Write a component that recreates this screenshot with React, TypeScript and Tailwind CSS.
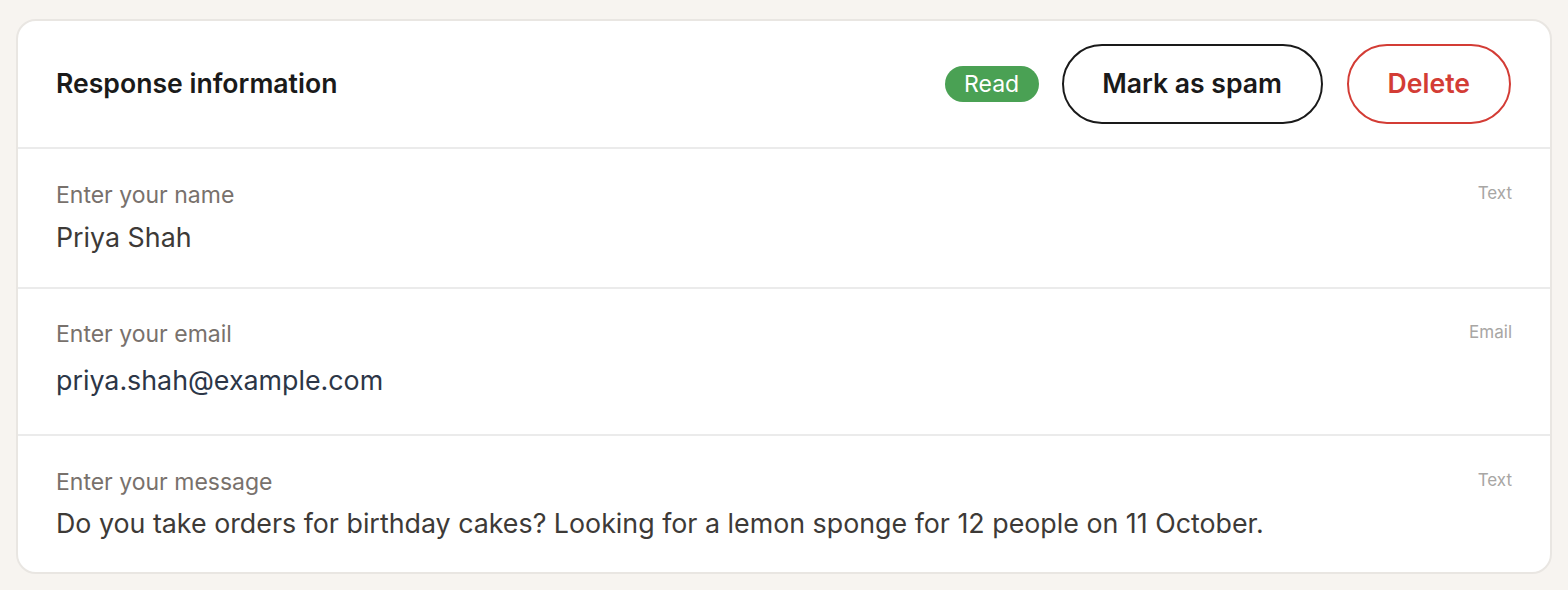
const fields = [
  {
    label: "Enter your name",
    value: "Priya Shah",
    type: "Text",
    rowClass: "pt-8 pb-[34px]",
    valueClass: "text-[#3d3a37] mt-3",
  },
  {
    label: "Enter your email",
    value: "priya.shah@example.com",
    type: "Email",
    rowClass: "pt-[31px] pb-[38px]",
    valueClass: "text-[#2c3647] mt-4",
  },
  {
    label: "Enter your message",
    value: "Do you take orders for birthday cakes? Looking for a lemon sponge for 12 people on 11 October.",
    type: "Text",
    rowClass: "pt-8 pb-[33px]",
    valueClass: "text-[#3d3a37] mt-[11px]",
  },
];

export default function App() {
  return (
    <div className="min-h-screen bg-[#f7f4f0] px-4 pt-[19px] pb-3 font-['Inter',sans-serif]">
      <div className="overflow-hidden rounded-[20px] border-2 border-[#e9e6e2] bg-white">
        <div className="flex items-center justify-between pl-[38px] pr-[39px] py-[23px]">
          <h2 className="text-[26.6px] font-semibold text-[#1a1a1a]">Response information</h2>
          <div className="flex items-center">
            <span className="rounded-full bg-[#4aa154] px-[19.5px] text-[23px] leading-9 text-white">Read</span>
            <button className="ml-[23px] h-20 rounded-full border-2 border-[#1a1a1a] px-[38.5px] text-[26.6px] font-semibold text-[#1a1a1a]">
              Mark as spam
            </button>
            <button className="ml-6 h-20 rounded-full border-2 border-[#d33c35] px-[39px] text-[26.6px] font-semibold text-[#d33c35]">
              Delete
            </button>
          </div>
        </div>
        {fields.map((f) => (
          <div
            key={f.label}
            className={`flex items-start justify-between border-t-2 border-[#ebebeb] px-[38px] ${f.rowClass}`}
          >
            <div>
              <p className="text-[23px] leading-7 text-[#78716c]">{f.label}</p>
              <p className={`text-[26.8px] leading-8 ${f.valueClass}`}>{f.value}</p>
            </div>
            <span className="text-[17px] leading-6 text-[#a8a6a4]">{f.type}</span>
          </div>
        ))}
      </div>
    </div>
  );
}
